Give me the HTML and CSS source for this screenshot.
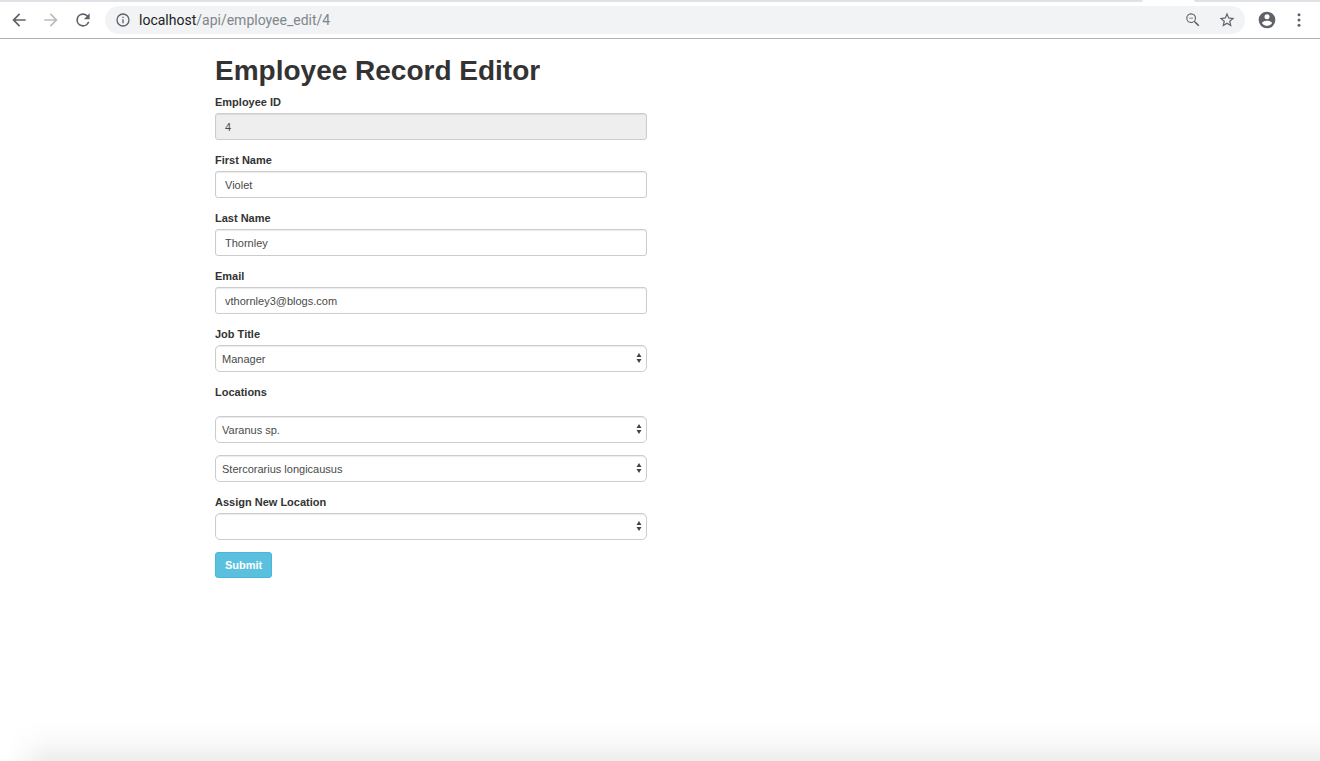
FILE: index.html
```
<!DOCTYPE html>
<html lang="en">
<head>
<meta charset="utf-8">
<meta name="viewport" content="width=device-width, initial-scale=1">
<title>Employee Record Editor</title>
<link rel="stylesheet" href="styles.css">
</head>
<body>
<header class="browser">
  <div class="tab-strip"><span class="tab-edge tab-edge-left"></span><span class="tab-edge tab-edge-right"></span></div>
  <div class="toolbar">
    <button class="nav-button" type="button" aria-label="Back"><svg viewBox="0 0 24 24"><path d="M20 11H7.83l5.59-5.59L12 4l-8 8 8 8 1.41-1.41L7.83 13H20z"/></svg></button>
    <button class="nav-button nav-disabled" type="button" aria-label="Forward" disabled><svg viewBox="0 0 24 24"><path d="M12 4l-1.41 1.41L16.17 11H4v2h12.17l-5.58 5.59L12 20l8-8z"/></svg></button>
    <button class="nav-button" type="button" aria-label="Reload"><svg viewBox="0 0 24 24"><path d="M17.65 6.35A7.96 7.96 0 0 0 12 4a8 8 0 1 0 7.73 10h-2.08A6 6 0 1 1 12 6c1.66 0 3.14.69 4.22 1.78L13 11h7V4z"/></svg></button>
    <div class="omnibox">
      <button class="icon-button" type="button" aria-label="Site information"><svg viewBox="0 0 24 24"><path d="M11 7h2v2h-2zm0 4h2v6h-2zm1-9a10 10 0 1 0 0 20 10 10 0 0 0 0-20zm0 18a8 8 0 1 1 0-16 8 8 0 0 1 0 16z"/></svg></button>
      <div class="address" role="textbox" aria-label="Address" contenteditable="true" spellcheck="false"><span class="host">localhost</span>/api/employee_edit/4</div>
      <button class="icon-button action" type="button" aria-label="Zoom"><svg viewBox="0 0 24 24"><path d="M15.5 14h-.79l-.28-.27A6.5 6.5 0 1 0 13.73 14.43l.27.28v.79l5 4.99L20.490 19zm-6 .5a5 5 0 1 1 0-10 5 5 0 0 1 0 10zM7 9h5v1H7z"/></svg></button>
      <button class="icon-button action star" type="button" aria-label="Bookmark"><svg viewBox="0 0 24 24"><path d="M22 9.240l-7.190-.62L12 2 9.190 8.630 2 9.240l5.460 4.730L5.820 21 12 17.270 18.180 21l-1.630-7.030zM12 15.400l-3.760 2.270 1-4.280-3.320-2.880 4.380-.38L12 6.100l1.710 4.040 4.380.38-3.320 2.880 1 4.280z"/></svg></button>
    </div>
    <button class="icon-button profile" type="button" aria-label="Profile"><svg viewBox="0 0 24 24"><path d="M12 2a10 10 0 1 0 0 20 10 10 0 0 0 0-20zm0 3a3 3 0 1 1 0 6 3 3 0 0 1 0-6zm0 14.200a7.200 7.200 0 0 1-6-3.220c.03-1.990 4-3.080 6-3.080s5.970 1.090 6 3.080a7.200 7.200 0 0 1-6 3.220z"/></svg></button>
    <button class="icon-button menu" type="button" aria-label="Menu"><svg viewBox="0 0 24 24"><circle cx="12" cy="5" r="2"/><circle cx="12" cy="12" r="2"/><circle cx="12" cy="19" r="2"/></svg></button>
  </div>
</header>
<main class="container">
  <h1 class="title">Employee Record Editor</h1>
  <form class="employee-form">
    <div class="field"><label class="label" for="employee-id">Employee ID</label><input class="control" id="employee-id" type="text" value="4" readonly></div>
    <div class="field"><label class="label" for="first-name">First Name</label><input class="control" id="first-name" type="text" value="Violet"></div>
    <div class="field"><label class="label" for="last-name">Last Name</label><input class="control" id="last-name" type="text" value="Thornley"></div>
    <div class="field"><label class="label" for="email">Email</label><input class="control" id="email" type="email" value="vthornley3@blogs.com"></div>
    <div class="field"><label class="label" for="job-title">Job Title</label>
      <div class="select-box"><select class="control select" id="job-title"><option>Manager</option></select><svg class="arrows" viewBox="0 0 6 10"><path d="M3 0l2.500 4h-5zM.5 6h5L3 10z"/></svg></div>
    </div>
    <div class="locations" role="group" aria-labelledby="locations-label">
      <label class="label" id="locations-label" for="location-1">Locations</label>
      <div class="location-list">
        <div class="select-box"><select class="control select" id="location-1"><option>Varanus sp.</option></select><svg class="arrows" viewBox="0 0 6 10"><path d="M3 0l2.500 4h-5zM.5 6h5L3 10z"/></svg></div>
        <div class="select-box"><select class="control select" aria-label="Second location"><option>Stercorarius longicausus</option></select><svg class="arrows" viewBox="0 0 6 10"><path d="M3 0l2.500 4h-5zM.5 6h5L3 10z"/></svg></div>
      </div>
    </div>
    <div class="field"><label class="label" for="new-location">Assign New Location</label>
      <div class="select-box"><select class="control select" id="new-location"><option></option></select><svg class="arrows" viewBox="0 0 6 10"><path d="M3 0l2.500 4h-5zM.5 6h5L3 10z"/></svg></div>
    </div>
    <button class="submit" type="submit">Submit</button>
  </form>
</main>
<div class="window-shade"></div>
</body>
</html>
```
FILE: styles.css
```
* { box-sizing: border-box; }
body {
  margin: 0;
  min-height: 100vh;
  display: flex;
  flex-direction: column;
  background: #fff;
  color: #333;
  font: 11px/16px "Liberation Sans", Arial, sans-serif;
}
button { border: 0; padding: 0; background: none; color: inherit; font: inherit; }
svg { display: block; fill: currentColor; }

.browser { border-bottom: 1px solid #b3b3b3; color: #5f6368; }
.tab-strip { display: flex; justify-content: space-between; height: 2px; }
.tab-edge { background: #dee1e6; }
.tab-edge-left { flex: 1; margin-right: 51px; border-bottom-right-radius: 2px; }
.tab-edge-right { width: 126px; border-bottom-left-radius: 2px; }
.toolbar { display: flex; align-items: center; height: 36px; padding: 0 12px 0 10px; }
.nav-button { width: 18px; height: 18px; margin-right: 14px; flex: none; }
.nav-button svg { width: 20px; height: 20px; margin: -1px; }
.nav-disabled { color: #babcbe; }
.omnibox {
  flex: 1;
  display: flex;
  align-items: center;
  height: 28px;
  margin-left: -1px;
  padding: 0 9px 0 10px;
  border-radius: 14px;
  background: #f1f3f4;
}
.icon-button { flex: none; width: 16px; height: 16px; }
.icon-button svg { width: 100%; height: 100%; }
.address {
  flex: 1;
  margin-left: 8px;
  color: #80868b;
  font: 14px/20px Roboto, sans-serif;
  white-space: nowrap;
  outline: none;
}
.host { color: #202124; }
.action { width: 18px; height: 18px; }
.star { margin-left: 16px; }
.profile { width: 20px; height: 20px; margin-left: 12px; }
.menu { width: 18px; height: 18px; margin-left: 13px; }

.container { width: 100%; max-width: 916px; margin: 0 auto; padding: 16px 13px 0; }
.title { margin: 0 0 7px; font-size: 28px; line-height: 32px; font-weight: 700; }
.employee-form { width: calc(50% - 13px); min-width: 240px; }
.field { margin-bottom: 12px; }
.label { display: block; margin-bottom: 3px; font-weight: 700; }
.control {
  display: block;
  width: 100%;
  height: 27px;
  padding: 0 9px;
  border: 1px solid #ccc;
  border-radius: 3px;
  background: #fff;
  box-shadow: inset 0 1px 1px rgba(0, 0, 0, 0.08);
  color: #4a4a4a;
  font: inherit;
}
.control[readonly] { background: #eee; }
.select-box { position: relative; }
.select { appearance: none; padding: 0 16px 0 6px; border-radius: 5px; }
.arrows { position: absolute; top: 8px; right: 5px; width: 6px; height: 10px; color: #444; pointer-events: none; }
.locations { margin-bottom: 12px; }
.location-list { display: grid; gap: 12px; padding-top: 13px; }
.submit {
  height: 26px;
  padding: 0 9px;
  border: 1px solid #46b8da;
  border-radius: 3px;
  background: #5bc0de;
  color: #fff;
  font-weight: 700;
}
.window-shade {
  height: 40px;
  margin-top: auto;
  background: linear-gradient(to bottom, rgba(0, 0, 0, 0), rgba(0, 0, 0, 0.02) 50%, rgba(0, 0, 0, 0.07));
  mask-image: linear-gradient(to right, transparent 8px, #000 48px);
}
```
